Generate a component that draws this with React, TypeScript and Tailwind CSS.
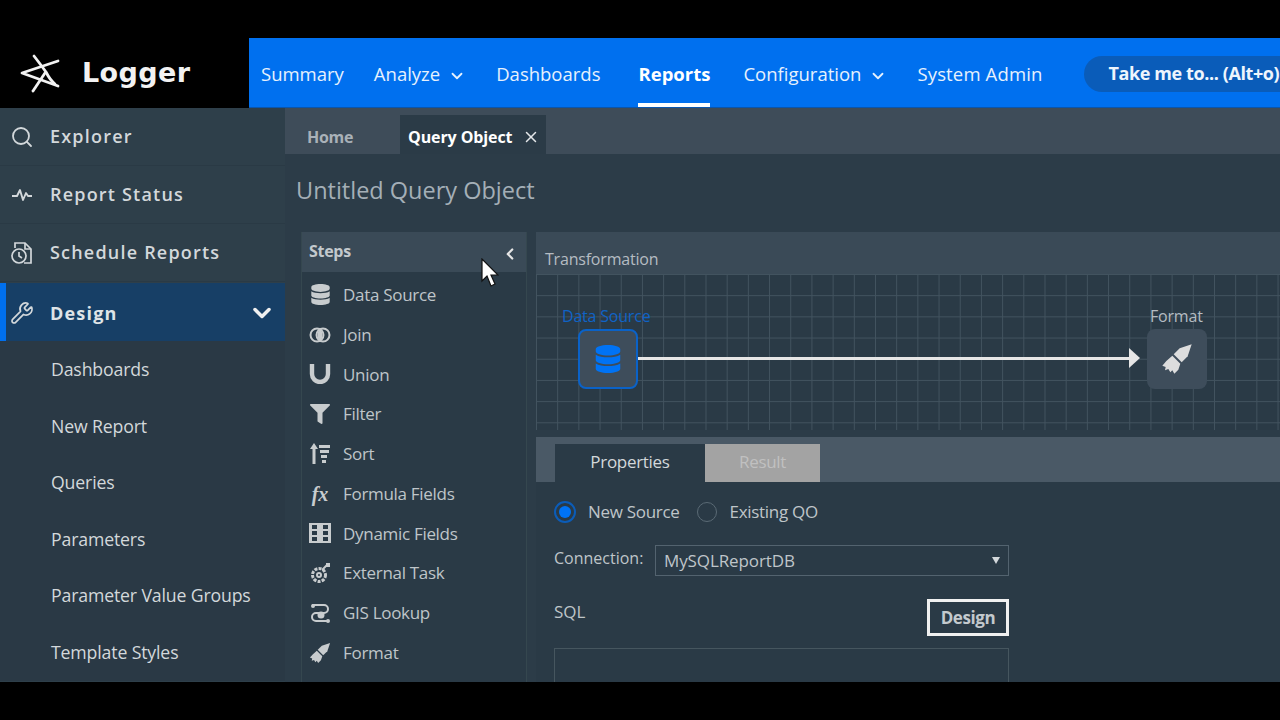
import React from "react";
import { ChevronDown, ChevronLeft, Search, Wrench, X } from "lucide-react";
import { FaDatabase, FaFilter } from "react-icons/fa";

const font = "font-['Open_Sans',_'Noto_Sans',_sans-serif]";

const LoggerMark = () => (
  <svg width="44" height="40" viewBox="0 0 44 40" fill="none" stroke="#f2f2f2" strokeWidth="2.8" strokeLinecap="round" strokeLinejoin="round">
    <path d="M39 8 L3 20 L39 33" />
    <path d="M15 3 Q22 12 27 19 Q31 27 36 31" />
    <path d="M14 38 L26 20" />
  </svg>
);

const Brush = ({ size = 22, color = "#c8ccce" }: { size?: number; color?: string }) => (
  <svg width={size} height={size} viewBox="0 0 24 24" fill={color}>
    <path d="M23 1 L14 4 L9.5 8.5 L15.5 14.5 L20 10 Z" />
    <path d="M8.5 9.5 L14.5 15.5 L13 20 L10 23 L8.5 20.5 L7 22 L5.5 19.5 L3 20.5 L3.5 18 L1 17 L4 13.5 Z" />
  </svg>
);

const Pulse = () => (
  <svg width="22" height="14" viewBox="0 0 22 14" fill="none" stroke="#d3d8db" strokeWidth="1.9" strokeLinejoin="round">
    <path d="M1 8 H6 L9 2 L12 12 L15 5 L17 8 H21" />
  </svg>
);

const Schedule = () => (
  <svg width="24" height="26" viewBox="0 0 24 26" fill="none" stroke="#d3d8db" strokeWidth="1.7">
    <path d="M5 8 V3 H15 L21 9 V23 H14" />
    <path d="M15 3 V9 H21" />
    <circle cx="9" cy="16" r="7" />
    <path d="M9 12 V16 L12 18" />
  </svg>
);

const Join = () => (
  <svg width="22" height="16" viewBox="0 0 22 16" fill="none" stroke="#c8ccce" strokeWidth="2">
    <circle cx="8" cy="8" r="6.5" />
    <circle cx="14" cy="8" r="6.5" />
    <path d="M11 3 Q8 8 11 13 Q14 8 11 3 Z" fill="#c8ccce" />
  </svg>
);

const Union = () => (
  <svg width="22" height="20" viewBox="0 0 22 20" fill="none" stroke="#c8ccce" strokeWidth="4.4">
    <path d="M3 0 V10 A8 8 0 0 0 19 10 V0" />
  </svg>
);

const Sort = () => (
  <svg width="22" height="22" viewBox="0 0 22 22" fill="#c8ccce">
    <path d="M5 0 L9 6 H6.5 V21 H3.5 V6 H1 Z" />
    <rect x="10" y="2" width="11" height="3" />
    <rect x="11" y="7" width="9" height="3" />
    <rect x="12" y="12" width="6" height="3" />
    <rect x="13" y="17" width="4" height="3" />
  </svg>
);

const Dynamic = () => (
  <svg width="22" height="20" viewBox="0 0 22 20" fill="#c8ccce">
    <path
      d="M0 0 H22 V20 H0 Z M3 2 V6 H8 V2 Z M14 2 V6 H19 V2 Z M3 8 V12 H8 V8 Z M14 8 V12 H19 V8 Z M3 14 V18 H8 V14 Z M14 14 V18 H19 V14 Z"
      fillRule="evenodd"
    />
  </svg>
);

const Task = () => (
  <svg width="22" height="22" viewBox="0 0 22 22" fill="none" stroke="#c8ccce" strokeWidth="2">
    <circle cx="10" cy="13" r="6.5" strokeDasharray="3 1.2" strokeWidth="3" />
    <circle cx="10" cy="13" r="2" />
    <rect x="17" y="1" width="4" height="4" fill="#c8ccce" stroke="none" />
    <path d="M13 8 L18 3" />
  </svg>
);

const Gis = () => (
  <svg width="22" height="22" viewBox="0 0 22 22" fill="none" stroke="#c8ccce" strokeWidth="2">
    <path d="M3 3 H15 A4 4 0 0 1 15 11 H7 A4 4 0 0 0 7 19 H19" />
    <circle cx="12" cy="13" r="3.5" fill="#c8ccce" stroke="none" />
    <circle cx="4" cy="4" r="2" fill="#c8ccce" stroke="none" />
    <circle cx="19" cy="19" r="2" fill="#c8ccce" stroke="none" />
  </svg>
);

const Fx = () => (
  <span className="font-['Liberation_Serif',_serif] text-[20px] font-bold italic leading-none text-[#c8ccce]">fx</span>
);

const steps: { label: string; icon: React.ReactNode }[] = [
  { label: "Data Source", icon: <FaDatabase size={21} color="#c8ccce" /> },
  { label: "Join", icon: <Join /> },
  { label: "Union", icon: <Union /> },
  { label: "Filter", icon: <FaFilter size={20} color="#c8ccce" /> },
  { label: "Sort", icon: <Sort /> },
  { label: "Formula Fields", icon: <Fx /> },
  { label: "Dynamic Fields", icon: <Dynamic /> },
  { label: "External Task", icon: <Task /> },
  { label: "GIS Lookup", icon: <Gis /> },
  { label: "Format", icon: <Brush /> },
];

const subItems = ["Dashboards", "New Report", "Queries", "Parameters", "Parameter Value Groups", "Template Styles"];

const SideItem = ({ icon, label }: { icon: React.ReactNode; label: string }) => (
  <div className="flex h-[58px] items-center border-b border-[#2a3a45]">
    <div className="mr-[6px] flex w-[44px] justify-center">{icon}</div>
    <span className="text-[18px] font-semibold tracking-[1.2px] text-[#d3d8db]">{label}</span>
  </div>
);

const NavItem = ({ label, caret, active, className = "" }: { label: string; caret?: boolean; active?: boolean; className?: string }) => (
  <div className={`relative flex h-full items-center gap-[8px] pt-[3px] text-[18.5px] text-[#e6f1fd] ${active ? "font-bold text-white" : "font-medium"} ${className}`}>
    {label}
    {caret && <ChevronDown size={18} strokeWidth={2.4} className="mt-[3px]" />}
    {active && <div className="absolute bottom-0 left-0 right-0 h-[4px] bg-white" />}
  </div>
);

export default function App() {
  return (
    <div className={`flex h-[720px] w-[1280px] flex-col overflow-hidden bg-black ${font}`}>
      <div className="h-[38px] shrink-0 bg-black" />

      <header className="flex h-[70px] shrink-0">
        <div className="flex w-[249px] items-center gap-[19px] bg-black pl-[19px]">
          <LoggerMark />
          <span className="font-['DejaVu_Sans',_sans-serif] text-[27px] font-bold tracking-[0.4px] text-[#f2f2f2]">Logger</span>
        </div>
        <div className="flex min-w-0 flex-1 items-center border-b border-[#0a56ad] bg-[#0070ef] pl-[12px]">
          <nav className="flex h-full shrink-0 items-center gap-[30px] whitespace-nowrap">
            <NavItem label="Summary" />
            <NavItem label="Analyze" caret />
            <NavItem label="Dashboards" />
            <NavItem label="Reports" active className="ml-[8px] mr-[3px]" />
            <NavItem label="Configuration" caret />
            <NavItem label="System Admin" className="tracking-[0.15px]" />
          </nav>
          <div className="ml-[41px] mt-[2px] flex h-[36px] flex-1 items-center whitespace-nowrap rounded-l-full bg-[#0a5cb9] pl-[25px] text-[18px] font-bold tracking-[-0.4px] text-[#eef5fd]">
            Take me to... (Alt+o)
          </div>
        </div>
      </header>

      <div className="relative flex h-[574px] shrink-0 overflow-hidden bg-[#2c3c48]">
        <aside className="w-[285px] shrink-0 bg-[#2e3f4a]">
          <SideItem icon={<Search size={24} strokeWidth={1.8} color="#d3d8db" />} label="Explorer" />
          <SideItem icon={<Pulse />} label="Report Status" />
          <SideItem icon={<Schedule />} label="Schedule Reports" />
          <div className="mt-[1px] flex h-[58px] items-center border-l-[6px] border-[#0070ef] bg-[#173f66] pt-[2px]">
            <div className="mr-[12px] flex w-[32px] justify-center">
              <Wrench size={24} strokeWidth={1.7} color="#d3d8db" />
            </div>
            <span className="flex-1 text-[18px] font-bold tracking-[1.2px] text-[#dfe4e7]">Design</span>
            <ChevronDown size={28} strokeWidth={3} color="#f0f0f0" className="mr-[9px]" />
          </div>
          <div className="bg-[#2a3945]">
            {subItems.map((item) => (
              <div key={item} className="flex h-[56.6px] items-center whitespace-nowrap pl-[51px] text-[17.7px] font-medium tracking-[-0.15px] text-[#d3d8db]">
                {item}
              </div>
            ))}
          </div>
        </aside>

        <main className="flex min-w-0 flex-1 flex-col">
          <div className="flex h-[46px] shrink-0 bg-[#3e4c59]">
            <div className="flex w-[115px] items-center pl-[22px] pt-[12px] text-[16px] font-bold tracking-[-0.3px] text-[#a9b1b8]">Home</div>
            <div className="mt-[7px] flex w-[146px] items-center gap-[10px] bg-[#2b3b47] pl-[8px] pt-[4px] text-[16px] font-bold tracking-[-0.1px] text-white">
              Query Object
              <X size={18} strokeWidth={2} color="#e4e7e9" />
            </div>
          </div>

          <div className="flex h-[78px] shrink-0 items-center whitespace-nowrap pb-[4px] pl-[11px] text-[23.5px] text-[#a4afb7]">Untitled Query Object</div>

          <div className="flex min-h-0 flex-1 gap-[9px] pl-[16px]">
            <section className="w-[226px] shrink-0 border-x border-[#35474f] bg-[#2a3a46]">
              <div className="flex h-[40px] items-center justify-between bg-[#3a4a57] pb-[2px] pl-[7px] pr-[7px] text-[16px] font-bold tracking-[-0.3px] text-[#c3c9cd]">
                Steps
                <ChevronLeft size={18} strokeWidth={3} color="#e6e6e6" className="mt-[6px]" />
              </div>
              <div className="pt-[3px]">
                {steps.map((step) => (
                  <div key={step.label} className="flex h-[39.75px] items-center">
                    <div className="mr-[5px] flex w-[36px] justify-center">{step.icon}</div>
                    <span className="text-[17px] tracking-[-0.3px] text-[#bfc5c9]">{step.label}</span>
                  </div>
                ))}
              </div>
            </section>

            <div className="flex min-w-0 flex-1 flex-col">
              <section className="h-[198px] shrink-0 bg-[#2a3a46]">
                <div className="flex h-[42px] items-center bg-[#3a4a57] pl-[9px] pt-[12px] text-[16px] tracking-[-0.2px] text-[#b5bcc2]">Transformation</div>
                <div className="relative h-[156px] bg-[#2a3a46] bg-[linear-gradient(to_right,#42535f_1px,transparent_1px),linear-gradient(to_bottom,#42535f_1px,transparent_1px)] bg-[size:21.2px_21.2px]">
                  <div className="absolute left-[26px] top-[30px] text-[16px] tracking-[-0.2px] text-[#0f63c7]">Data Source</div>
                  <div className="absolute left-[42px] top-[55px] flex h-[60px] w-[60px] items-center justify-center rounded-[8px] border-2 border-[#0a62c8] bg-[#3e4d5b]">
                    <FaDatabase size={28} color="#0073f5" />
                  </div>
                  <div className="absolute left-[102px] top-[83px] h-[3px] w-[493px] bg-[#e6e6e6]" />
                  <div className="absolute left-[593px] top-[74px] h-0 w-0 border-y-[10px] border-l-[11px] border-y-transparent border-l-[#e6e6e6]" />
                  <div className="absolute left-[614px] top-[30px] text-[16px] tracking-[-0.2px] text-[#b5bcc2]">Format</div>
                  <div className="absolute left-[611px] top-[55px] flex h-[60px] w-[60px] items-center justify-center rounded-[8px] bg-[#3e4d5b]">
                    <Brush size={32} color="#dddddd" />
                  </div>
                </div>
              </section>

              <section className="mt-[7px] min-h-0 flex-1 bg-[#2a3a46]">
                <div className="flex h-[45px] items-end bg-[#4a5966] pl-[19px]">
                  <div className="flex h-[38px] w-[150px] items-center justify-center bg-[#2a3a46] pb-[2px] text-[17px] tracking-[-0.3px] text-[#d3d8db]">Properties</div>
                  <div className="flex h-[38px] w-[115px] items-center justify-center bg-[#a3a3a3] pb-[2px] text-[17px] tracking-[-0.3px] text-[#c0c0c0]">Result</div>
                </div>
                <div className="w-[473px] pl-[18px]">
                  <div className="flex h-[60px] items-center text-[17px] tracking-[-0.3px] text-[#bfc5c9]">
                    <div className="flex h-[22px] w-[22px] items-center justify-center rounded-full border-2 border-[#0b5cb8]">
                      <div className="h-[12px] w-[12px] rounded-full bg-[#0073f5]" />
                    </div>
                    <span className="ml-[12px]">New Source</span>
                    <div className="ml-[17px] h-[20px] w-[20px] rounded-full border border-[#5a6a75]" />
                    <span className="ml-[13px]">Existing QO</span>
                  </div>
                  <div className="mt-[3px] flex items-center justify-between">
                    <span className="mb-[6px] text-[16px] text-[#bfc5c9]">Connection:</span>
                    <div className="flex h-[31px] w-[354px] items-center justify-between border border-[#53636f] px-[8px] text-[17px] tracking-[-0.1px] text-[#bfc5c9]">
                      MySQLReportDB
                      <span className="h-0 w-0 border-x-[4px] border-t-[7px] border-x-transparent border-t-[#d3d8db]" />
                    </div>
                  </div>
                  <div className="mt-[23px] flex items-start justify-between">
                    <span className="text-[17px] text-[#bfc5c9]">SQL</span>
                    <div className="flex h-[37px] w-[82px] items-center justify-center border-[3px] border-[#f0f0f0] text-[17px] font-bold tracking-[-0.4px] text-[#c3c9cd]">Design</div>
                  </div>
                  <div className="mt-[12px] h-[40px] border border-[#46565f]" />
                </div>
              </section>
            </div>
          </div>
        </main>

        <svg className="absolute left-[481px] top-[150px]" width="18" height="30" viewBox="0 0 18 30">
          <path d="M1 1 V23 L6 18 L10 28 L14 26 L10 17 L17 17 Z" fill="#ffffff" stroke="#111111" strokeWidth="1.2" />
        </svg>
      </div>

      <div className="flex-1 bg-black" />
    </div>
  );
}
